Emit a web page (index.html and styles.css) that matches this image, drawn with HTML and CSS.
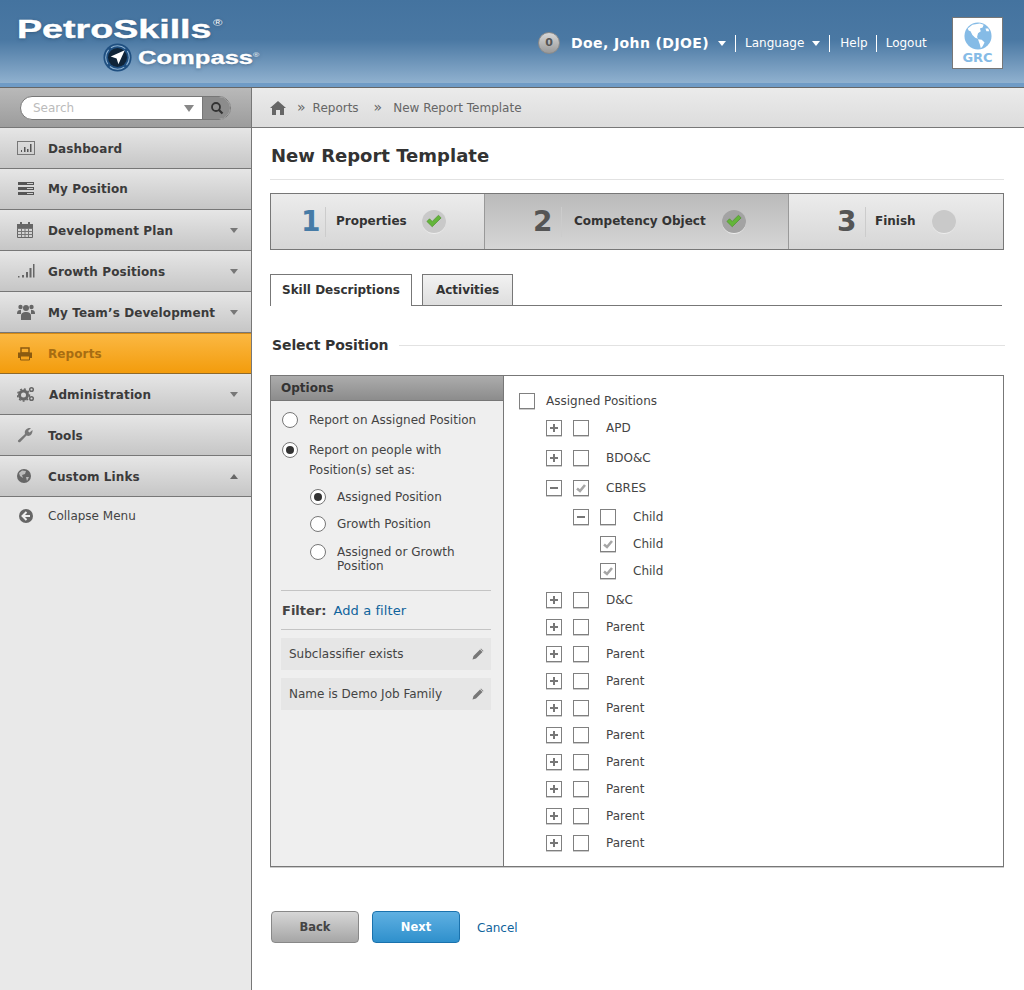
FILE: index.html
```html
<!DOCTYPE html>
<html>
<head>
<meta charset="utf-8"/>
<title>New Report Template</title>
<link rel="stylesheet" href="styles.css">
</head>
<body>

<div class="header">
  <div class="logo">
    <div class="logo_main"><span class="wide">PetroSkills<sup>®</sup></span></div>
    <div class="logo_sub">
      <svg class="compass" width="29" height="29" viewBox="0 0 32 32">
        <circle cx="16" cy="16" r="15.500" fill="#1f4f80"/>
        <circle cx="16" cy="16" r="13" fill="none" stroke="#8fb3d2" stroke-width="1.200" stroke-dasharray="17 3.400" stroke-dashoffset="8"/>
        <circle cx="16" cy="16" r="10.500" fill="#0f2438"/>
        <path d="M24 8 L8.500 15 L15 17 L17 23.500 Z" fill="#fff"/>
      </svg>
      <span class="wide">Compass<sup>®</sup></span>
    </div>
  </div>
  <div class="usernav">
    <span class="badge">0</span>
    <span class="username">Doe, John (DJOE)</span>
    <span class="caret"></span>
    <a class="navlink sep">Language<span class="caret small"></span></a>
    <a class="navlink sep">Help</a>
    <a class="navlink sep">Logout</a>
  </div>
  <div class="grc">
    <svg width="28" height="28" viewBox="0 0 30 30">
      <circle cx="15" cy="15" r="14.500" fill="#85bbe6"/>
      <path d="M4 7 L9 3 L17 1.500 L21 3 L20 6 L17 7 L18 10 L15 12 L14 16 L15 18 L12 17 L9 14 L7 10 L5 9 Z" fill="#fff"/>
      <path d="M15 18.500 L19 19 L22 22 L20 26 L18 28 L17 24 Z" fill="#fff"/>
      <path d="M23 7 L26 7 L27 10 L24 10 Z" fill="#fff"/>
    </svg>
    <div class="grc_text">GRC</div>
  </div>
</div>

<div class="layout">
  <div class="sidebar">
    <div class="searchbar">
      <div class="search">
        <span class="search_text">Search</span>
        <span class="caret grey"></span>
        <span class="search_btn">
          <svg width="14" height="14" viewBox="0 0 14 14"><circle cx="6" cy="6" r="4" fill="none" stroke="#333" stroke-width="1.800"/><path d="M9 9 L12.500 12.500" stroke="#333" stroke-width="2.200"/></svg>
        </span>
      </div>
    </div>

    <a class="menu">
      <svg class="ico" width="18" height="14" viewBox="0 0 18 14"><rect x="0.500" y="0.500" width="17" height="13" fill="none" stroke="#777"/><path d="M4 9h1v2H4zM7 6h1.500v5H7zM10 8h1.500v3H10zM13 3h1.500v8H13z" fill="#555"/></svg>
      <span>Dashboard</span>
    </a>
    <a class="menu lift">
      <svg class="ico" width="18" height="14" viewBox="0 0 18 14"><path d="M1 0h16v3H1zM1 5h16v3H1zM1 10h16v3H1z" fill="#555"/><path d="M10 1.500h6M10 6.500h6M10 11.500h6" stroke="#ccc"/></svg>
      <span>My Position</span>
    </a>
    <a class="menu">
      <svg class="ico" width="16" height="18" viewBox="0 0 16 18"><path d="M0.500 3.500h15v13h-15z" fill="none" stroke="#666"/><path d="M0.500 7.500h15M0.500 10.500h15M0.500 13.500h15M4.500 7v9M8 7v9M11.500 7v9" stroke="#777"/><path d="M0 3h16v4H0zM3 1h2v3H3zM11 1h2v3h-2z" fill="#666"/></svg>
      <span>Development Plan</span>
      <span class="caret grey"></span>
    </a>
    <a class="menu">
      <svg class="ico" width="18" height="14" viewBox="0 0 18 14"><path d="M1 12h1.500v1.500H1zM5 11h2v2.500H5zM9 8h2v5.500H9zM12.500 4h2v9.500h-2zM16 0h1.500v13.500H16z" fill="#666"/></svg>
      <span>Growth Positions</span>
      <span class="caret grey"></span>
    </a>
    <a class="menu">
      <svg class="ico" width="18" height="16" viewBox="0 0 18 16"><circle cx="3.500" cy="3" r="2.200" fill="#666"/><circle cx="14.500" cy="3" r="2.200" fill="#666"/><circle cx="9" cy="4" r="3" fill="#666"/><path d="M0 10c0-3 1-4 3-4h1v4zM18 10c0-3-1-4-3-4h-1v4z" fill="#666"/><path d="M4 16v-4c0-3 2-4 5-4s5 1 5 4v4z" fill="#666"/></svg>
      <span>My Team’s Development</span>
      <span class="caret grey"></span>
    </a>
    <a class="menu active">
      <svg class="ico" width="16" height="14" viewBox="0 0 16 14"><path d="M4 1h8v5H4z" fill="none" stroke="#8a5a10" stroke-width="1.500"/><path d="M1 5.500h14v5.500H1z" fill="#8a5a10"/><path d="M3.500 9h9v4h-9z" fill="#f6a31c" stroke="#8a5a10"/></svg>
      <span>Reports</span>
    </a>
    <a class="menu admin">
      <svg class="ico" width="18" height="16" viewBox="0 0 18 16"><circle cx="6.500" cy="9" r="4" fill="none" stroke="#666" stroke-width="3"/><circle cx="6.500" cy="9" r="6" fill="none" stroke="#666" stroke-width="1.400" stroke-dasharray="2 2"/><circle cx="14.500" cy="3.500" r="1.800" fill="none" stroke="#666" stroke-width="1.500"/><circle cx="14.500" cy="12.500" r="1.800" fill="none" stroke="#666" stroke-width="1.500"/></svg>
      <span>Administration</span>
      <span class="caret grey"></span>
    </a>
    <a class="menu">
      <svg class="ico" width="16" height="16" viewBox="0 0 16 16"><path d="M1 13.500 L8 7 C7 3 10 0.500 14 1 L11 4 L12.500 5.500 L15.500 3 C15.800 7 13 10 9.500 8.500 L3 15.200 C2 15.800 0.500 14.500 1 13.500 Z" fill="#777"/></svg>
      <span>Tools</span>
    </a>
    <a class="menu">
      <svg class="ico" width="14" height="14" viewBox="0 0 14 14"><circle cx="7" cy="7" r="7" fill="#666"/><path d="M5 1.500 L9 2 L8 5 L5 6 L6 9 L3 7 L2 4 Z M9 8 L12 8 L10 12 Z" fill="#bbb"/></svg>
      <span>Custom Links</span>
      <span class="caret grey up"></span>
    </a>
    <a class="collapse">
      <svg class="ico" width="14" height="14" viewBox="0 0 14 14"><circle cx="7" cy="7" r="7" fill="#666"/><path d="M7.500 3 L3.500 7 L7.500 11 M3.800 7 H11" fill="none" stroke="#eee" stroke-width="2"/></svg>
      <span>Collapse Menu</span>
    </a>
  </div>

  <div class="content">
    <div class="crumbs">
      <svg width="16" height="14" viewBox="0 0 16 14"><path d="M8 0 L16 7 L14 7 L14 14 L10 14 L10 9 L6 9 L6 14 L2 14 L2 7 L0 7 Z" fill="#666"/></svg>
      <span class="crumb_sep">»</span>
      <span>Reports</span>
      <span class="crumb_sep">»</span>
      <span>New Report Template</span>
    </div>

    <div class="main">
      <h1>New Report Template</h1>

      <div class="steps">
        <div class="step step1">
          <span class="num blue">1</span>
          <span class="step_label">Properties</span>
          <span class="dot"><svg width="16" height="14" viewBox="0 0 18 15"><path d="M1 8 L4 5 L7 8 L14 1 L17 4 L7 14 Z" fill="#63b53a" stroke="#4a8c2a" stroke-width="0.700"/></svg></span>
        </div>
        <div class="step step2">
          <span class="num">2</span>
          <span class="step_label">Competency Object</span>
          <span class="dot"><svg width="16" height="14" viewBox="0 0 18 15"><path d="M1 8 L4 5 L7 8 L14 1 L17 4 L7 14 Z" fill="#63b53a" stroke="#4a8c2a" stroke-width="0.700"/></svg></span>
        </div>
        <div class="step step3">
          <span class="num">3</span>
          <span class="step_label">Finish</span>
          <span class="dot"></span>
        </div>
      </div>

      <div class="tabs">
        <a class="tab on">Skill Descriptions</a>
        <a class="tab">Activities</a>
      </div>

      <div class="section">
        <h2>Select Position</h2>
        <div class="section_line"></div>
      </div>

      <div class="panel">
        <div class="options">
          <div class="options_head">Options</div>
          <div class="options_body">
            <label class="opt"><span class="radio"></span><span>Report on Assigned Position</span></label>
            <label class="opt opt2"><span class="radio on"></span><span>Report on people with<br>Position(s) set as:</span></label>
            <div class="subopts">
              <label class="opt"><span class="radio on"></span><span>Assigned Position</span></label>
              <label class="opt"><span class="radio"></span><span>Growth Position</span></label>
              <label class="opt tight"><span class="radio"></span><span>Assigned or Growth<br>Position</span></label>
            </div>
            <div class="filter"><b>Filter:</b><a class="link">Add a filter</a></div>
            <div class="chip"><span>Subclassifier exists</span><svg width="12" height="12" viewBox="0 0 12 12"><path d="M0.500 11.500 L1.500 8 L8 1.500 L10.500 4 L4 10.500 Z M9 0.500 L11.500 3 L11 3.500 L8.500 1 Z" fill="#777"/></svg></div>
            <div class="chip"><span>Name is Demo Job Family</span><svg width="12" height="12" viewBox="0 0 12 12"><path d="M0.500 11.500 L1.500 8 L8 1.500 L10.500 4 L4 10.500 Z M9 0.500 L11.500 3 L11 3.500 L8.500 1 Z" fill="#777"/></svg></div>
          </div>
        </div>
        <div class="tree">
          <div class="row"><span class="box"></span><span class="tlabel near">Assigned Positions</span></div>
          <div class="row lv1"><span class="tog plus"></span><span class="box"></span><span class="tlabel">APD</span></div>
          <div class="row lv1 gap3"><span class="tog plus"></span><span class="box"></span><span class="tlabel">BDO&amp;C</span></div>
          <div class="row lv1 gap3"><span class="tog"></span><span class="box"><svg width="14" height="14" viewBox="0 0 14 14"><path d="M3 7.500 L6 10 L11 4" fill="none" stroke="#a6a6a6" stroke-width="2.600"/></svg></span><span class="tlabel">CBRES</span></div>
          <div class="row lv2 gap2"><span class="tog"></span><span class="box"></span><span class="tlabel">Child</span></div>
          <div class="row lv3"><span class="box"><svg width="14" height="14" viewBox="0 0 14 14"><path d="M3 7.500 L6 10 L11 4" fill="none" stroke="#a6a6a6" stroke-width="2.600"/></svg></span><span class="tlabel">Child</span></div>
          <div class="row lv3"><span class="box"><svg width="14" height="14" viewBox="0 0 14 14"><path d="M3 7.500 L6 10 L11 4" fill="none" stroke="#a6a6a6" stroke-width="2.600"/></svg></span><span class="tlabel">Child</span></div>
          <div class="row lv1 gap2"><span class="tog plus"></span><span class="box"></span><span class="tlabel">D&amp;C</span></div>
          <div class="row lv1"><span class="tog plus"></span><span class="box"></span><span class="tlabel">Parent</span></div>
          <div class="row lv1"><span class="tog plus"></span><span class="box"></span><span class="tlabel">Parent</span></div>
          <div class="row lv1"><span class="tog plus"></span><span class="box"></span><span class="tlabel">Parent</span></div>
          <div class="row lv1"><span class="tog plus"></span><span class="box"></span><span class="tlabel">Parent</span></div>
          <div class="row lv1"><span class="tog plus"></span><span class="box"></span><span class="tlabel">Parent</span></div>
          <div class="row lv1"><span class="tog plus"></span><span class="box"></span><span class="tlabel">Parent</span></div>
          <div class="row lv1"><span class="tog plus"></span><span class="box"></span><span class="tlabel">Parent</span></div>
          <div class="row lv1"><span class="tog plus"></span><span class="box"></span><span class="tlabel">Parent</span></div>
          <div class="row lv1"><span class="tog plus"></span><span class="box"></span><span class="tlabel">Parent</span></div>
        </div>
      </div>

      <div class="actions">
        <a class="btn back">Back</a>
        <a class="btn next">Next</a>
        <a class="link cancel">Cancel</a>
      </div>
    </div>
  </div>
</div>

</body>
</html>
```

FILE: styles.css
```css
*{
  padding:0;
  margin:0;
  box-sizing:border-box;
}
html,body{
  height:990px;
  overflow:hidden;
}
body{
  font-family:"DejaVu Sans",Verdana,sans-serif;
  font-size:12px;
  color:#444;
  background:#fff;
}
.caret{
  display:inline-block;
  width:0;
  height:0;
  border-left:4px solid transparent;
  border-right:4px solid transparent;
  border-top:5px solid #fff;
}
.caret.grey{
  border-top-color:#777;
}
.caret.up{
  border-top:0;
  border-bottom:5px solid #666;
}

/* header */
.header{
  height:88px;
  display:flex;
  align-items:flex-start;
  background:linear-gradient(#44739f 0,#4a78a3 45%,#90b1cf 83px,#6f9bc6 83px,#6f9bc6 87px,#666 87px);
  color:#fff;
}
.logo{
  width:520px;
  padding:15px 0 0 17px;
  font-family:"Liberation Sans",Arial,sans-serif;
  font-weight:bold;
  text-shadow:0 1px 3px rgba(30,60,90,.5);
}
.wide{
  display:inline-block;
  transform:scaleX(1.42);
  transform-origin:left center;
}
.logo_main{
  font-size:26.500px;
  line-height:28px;
  -webkit-text-stroke:0.4px #fff;
}
.logo_main sup{
  font-size:9px;
  font-weight:normal;
  vertical-align:12px;
  line-height:0;
  margin-left:1px;
  -webkit-text-stroke:0;
}
.logo_sub{
  display:flex;
  align-items:center;
  gap:6px;
  margin:0 0 0 86px;
  font-size:18px;
  -webkit-text-stroke:0.3px #fff;
}
.logo_sub .wide{
  margin-top:2px;
}
.logo_sub sup{
  font-size:6px;
  font-weight:normal;
  vertical-align:7px;
  line-height:0;
  -webkit-text-stroke:0;
}
.usernav{
  display:flex;
  align-items:center;
  height:22px;
  margin:32px 0 0 18px;
  width:414px;
}
.badge{
  width:22px;
  height:22px;
  border-radius:50%;
  background:linear-gradient(#d8d8d8,#999);
  border:1px solid #8a8a8a;
  color:#555;
  font-weight:bold;
  font-size:11px;
  line-height:20px;
  text-align:center;
  margin-right:11px;
}
.username{
  font-weight:bold;
  font-size:14px;
  margin-right:9px;
  letter-spacing:.4px;
}
.navlink{
  color:#fff;
  padding:0 0 0 9px;
  height:17px;
  line-height:16px;
  display:flex;
  align-items:center;
}
.navlink .caret{
  margin:0 9px 0 8px;
}
.navlink.sep{
  border-left:1px solid #fff;
}
.navlink:nth-of-type(1){
  margin-left:9px;
}
.navlink:nth-of-type(2){
  padding-left:10px;
  padding-right:8px;
}
.grc{
  width:51px;
  height:52px;
  margin-top:17px;
  background:#fff;
  border:1px solid #777;
  text-align:center;
  padding-top:4px;
}
.grc svg{
  display:block;
  margin:0 auto;
}
.grc_text{
  font-weight:bold;
  font-size:13px;
  line-height:14px;
  margin-top:1px;
  color:#85bbe6;
}

/* left menu */
.layout{
  display:flex;
  height:902px;
}
.sidebar{
  width:252px;
  flex:none;
  background:#e9e9e9;
  border-right:1px solid #777;
}
.searchbar{
  height:40px;
  padding:8px 0 0 20px;
  background:linear-gradient(#b9b9b9,#9c9c9c);
  border-bottom:1px solid #777;
}
.search{
  width:211px;
  height:24px;
  display:flex;
  align-items:center;
  background:#fff;
  border:1px solid #777;
  border-radius:12px;
  overflow:hidden;
}
.search_text{
  color:#bbb;
  margin-left:12px;
  flex:1;
}
.search .caret{
  border-left-width:5px;
  border-right-width:5px;
  border-top-width:7px;
  margin-right:8px;
  border-top-color:#888;
}
.search_btn{
  width:28px;
  height:24px;
  background:#8c8c8c;
  border-left:1px solid #777;
  display:flex;
  align-items:center;
  justify-content:center;
}
.menu{
  height:41px;
  display:flex;
  align-items:center;
  padding:1px 0 0 18px;
  font-weight:bold;
  color:#3b3b3b;
  letter-spacing:.1px;
  background:linear-gradient(#e6e6e6,#c6c6c6);
  border-bottom:1px solid #777;
  position:relative;
}
.menu.lift{
  padding-top:0;
}
.menu .ico{
  position:absolute;
  left:17px;
  top:50%;
  transform:translateY(-50%);
}
.menu span:first-of-type{
  margin-left:30px;
}
.menu.admin span:first-of-type{
  margin-left:31px;
}
.menu .caret{
  position:absolute;
  right:13px;
  top:18px;
}
.menu.active{
  padding-top:0;
  background:linear-gradient(#fbb843,#f39c0c);
  color:#a76d12;
  border-top:1px solid #d78a12;
  border-bottom-color:#8e6a2c;
}
.collapse{
  display:flex;
  align-items:center;
  height:38px;
  padding-left:48px;
  position:relative;
  color:#444;
}
.collapse .ico{
  position:absolute;
  left:19px;
  top:12px;
}

/* content */
.content{
  flex:1;
  min-width:0;
}
.crumbs{
  height:40px;
  display:flex;
  align-items:center;
  gap:9px;
  padding-left:18px;
  color:#666;
  background:linear-gradient(#ebebeb,#dcdcdc);
  border-bottom:1px solid #777;
}
.crumb_sep{
  font-size:14px;
  padding-left:2px;
  margin:-1px -2px 0 0;
}
.crumb_sep:nth-of-type(3){
  padding:0 2px 0 6px;
  margin-right:0;
}
.main{
  padding:17px 20px 0 18px;
}
h1{
  font-size:18px;
  line-height:22px;
  font-weight:bold;
  color:#333;
  padding:0 0 12px 1px;
  border-bottom:1px solid #e2e2e2;
}
.steps{
  display:flex;
  height:57px;
  margin-top:13px;
  border:1px solid #777;
}
.step{
  display:flex;
  align-items:center;
  background:linear-gradient(#ececec,#d6d6d6);
}
.step1{
  width:213px;
  padding-left:30px;
}
.step2{
  width:305px;
  padding-left:48px;
  background:linear-gradient(#bababa,#d6d6d6);
  border-left:1px solid #999;
  border-right:1px solid #999;
}
.step3{
  flex:1;
  padding-left:48px;
}
.num{
  font-size:28px;
  font-weight:bold;
  color:#555;
  width:28px;
  line-height:30px;
}
.num.blue{
  color:#467ba6;
  width:24px;
}
.step_label{
  height:30px;
  line-height:29px;
  padding-left:12px;
  border-left:1px solid #ccc;
  font-weight:bold;
  color:#333;
}
.step1 .step_label{
  padding-left:10px;
}
.step3 .step_label{
  padding-left:9px;
}
.dot{
  width:24px;
  height:24px;
  border-radius:50%;
  margin-left:16px;
  background:#c9c9c9;
  border-bottom:1px solid #eee;
  display:flex;
  align-items:center;
  justify-content:center;
}
.step1 .dot{
  margin-left:15px;
}
.step2 .dot{
  background:#a3a3a3;
}

/* tabs */
.tabs{
  display:flex;
  gap:10px;
  margin-top:24px;
  height:32px;
  width:732px;
  border-bottom:1px solid #777;
}
.tab{
  height:31px;
  padding:0 13px;
  line-height:30px;
  font-weight:bold;
  color:#333;
  border:1px solid #777;
  border-bottom:0;
  background:linear-gradient(#f2f2f2,#dedede);
}
.tab.on{
  height:32px;
  padding:0 11px;
  background:#fff;
}
.section{
  display:flex;
  align-items:center;
  gap:11px;
  margin-top:29px;
  height:20px;
  padding-left:2px;
  width:735px;
}
h2{
  font-size:14px;
  font-weight:bold;
  color:#333;
  letter-spacing:-.1px;
}
.section_line{
  flex:1;
  height:1px;
  background:#e2e2e2;
}

/* panel */
.panel{
  display:flex;
  width:734px;
  height:492px;
  margin-top:20px;
  border:1px solid #777;
  box-shadow:0 1px 0 #ccc;
}
.options{
  width:233px;
  flex:none;
  background:#efefef;
  border-right:1px solid #777;
}
.options_head{
  height:25px;
  line-height:25px;
  padding-left:10px;
  font-weight:bold;
  color:#333;
  background:linear-gradient(#acacac,#8c8c8c);
  border-bottom:1px solid #777;
}
.options_body{
  padding:9px 12px 0 10px;
}
.opt{
  display:flex;
  align-items:flex-start;
  gap:11px;
  line-height:20px;
  padding-left:1px;
}
.radio{
  width:16px;
  height:16px;
  flex:none;
  margin-top:2px;
  border:1px solid #777;
  border-radius:50%;
  background:#fff;
  display:flex;
  align-items:center;
  justify-content:center;
}
.radio.on::after{
  content:"";
  width:8px;
  height:8px;
  border-radius:50%;
  background:#333;
}
.opt2{
  margin-top:10px;
}
.subopts{
  padding-left:28px;
  margin-top:7px;
  display:flex;
  flex-direction:column;
  gap:7px;
}
.opt.tight{
  line-height:14px;
  margin-top:4px;
}
.opt.tight .radio{
  margin-top:-1px;
}
.filter{
  margin-top:17px;
  height:40px;
  line-height:40px;
  border-top:1px solid #c4c4c4;
  border-bottom:1px solid #c4c4c4;
  padding-left:1px;
  font-size:13px;
}
.filter b{
  color:#444;
  margin-right:7px;
}
.filter .link{
  letter-spacing:.1px;
}
.link{
  color:#0f639c;
}
.chip{
  height:32px;
  margin-top:8px;
  padding:0 7px 0 8px;
  display:flex;
  align-items:center;
  justify-content:space-between;
  background:#e6e6e6;
}

/* tree */
.tree{
  flex:1;
  padding:11px 0 0 15px;
}
.row{
  height:27px;
  display:flex;
  align-items:center;
}
.box,.tog{
  width:16px;
  height:16px;
  flex:none;
  border:1px solid #808080;
  background:#fff;
  box-shadow:0 1px 0 #ccc;
  display:block;
}
.box svg{
  display:block;
}
.tog{
  margin-right:11px;
  background:linear-gradient(#777,#777) center/8px 2px no-repeat,#fff;
}
.tog.plus{
  background:linear-gradient(#777,#777) center/8px 2px no-repeat,linear-gradient(#777,#777) center/2px 8px no-repeat,#fff;
}
.tlabel{
  margin-left:17px;
}
.tlabel.near{
  margin-left:11px;
}
.lv1{
  padding-left:27px;
}
.lv2{
  padding-left:54px;
}
.lv3{
  padding-left:81px;
}
.gap3{
  margin-top:3px;
}
.gap2{
  margin-top:2px;
}

/* buttons */
.actions{
  display:flex;
  align-items:center;
  margin-top:44px;
  padding-left:1px;
}
.btn{
  width:88px;
  height:32px;
  line-height:31px;
  text-align:center;
  font-size:11.500px;
  font-weight:bold;
  border-radius:4px;
  border:1px solid #888;
  margin-right:13px;
}
.back{
  color:#444;
  background:linear-gradient(#d6d6d6,#a6a6a6);
}
.next{
  color:#fff;
  background:linear-gradient(#5fb0e2,#2f90cc);
  border-color:#1a72ad;
  margin-right:17px;
}
.cancel{
  padding-top:1px;
}
```
